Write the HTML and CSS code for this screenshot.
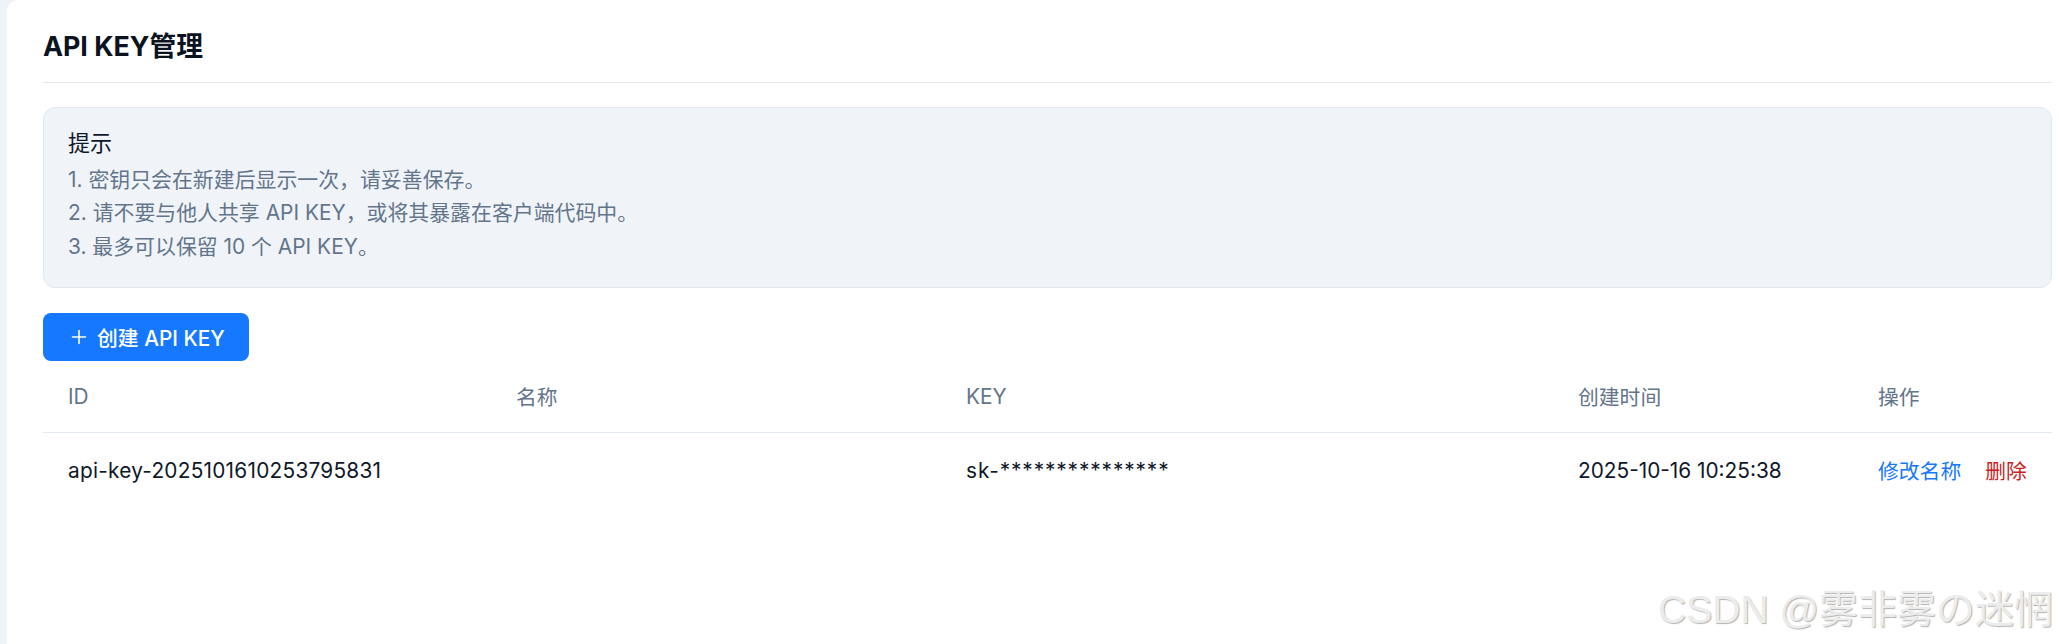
FILE: index.html
```html
<!DOCTYPE html>
<html lang="zh-CN">
<head>
<meta charset="utf-8">
<title>API KEY管理</title>
<link rel="stylesheet" href="styles.css">
</head>
<body>
<div class="page">
  <main class="card">
    <h1 class="title">API KEY管理</h1>
    <section class="tip">
      <div class="tip-title">提示</div>
      <div class="tip-line">1. 密钥只会在新建后显示一次，请妥善保存。</div>
      <div class="tip-line">2. 请不要与他人共享 API KEY，或将其暴露在客户端代码中。</div>
      <div class="tip-line">3. 最多可以保留 10 个 API KEY。</div>
    </section>
    <button class="btn-primary" type="button">
      <svg class="plus" width="16" height="16" viewBox="0 0 16 16" aria-hidden="true">
        <path d="M8 1.5v13M1.5 8h13" stroke="#fff" stroke-width="1.6" fill="none" stroke-linecap="round"/>
      </svg>
      <span>创建 API KEY</span>
    </button>
    <div class="table">
      <div class="row head">
        <div class="cell">ID</div>
        <div class="cell">名称</div>
        <div class="cell">KEY</div>
        <div class="cell">创建时间</div>
        <div class="cell">操作</div>
      </div>
      <div class="row body">
        <div class="cell id-text">api-key-2025101610253795831</div>
        <div class="cell"></div>
        <div class="cell key-text">sk-***************</div>
        <div class="cell">2025-10-16 10:25:38</div>
        <div class="cell actions">
          <a class="link" href="#">修改名称</a>
          <a class="link danger" href="#">删除</a>
        </div>
      </div>
    </div>
  </main>
  <div class="watermark">CSDN @雾非雾の迷惘</div>
</div>
</body>
</html>
```

FILE: styles.css
```css
* { box-sizing: border-box; }

html, body {
  margin: 0;
  padding: 0;
  height: 100%;
}

body {
  background: #eff3f8;
  font-family: Inter, "Noto Sans CJK SC", sans-serif;
  color: #0f172a;
  overflow: hidden;
}

.page {
  position: relative;
  min-height: 100vh;
  padding-left: 7px;
  display: flex;
}

.card {
  flex: 1;
  background: #ffffff;
  border-top-left-radius: 12px;
  padding: 28px 7px 0 36px;
  min-height: 100vh;
}

.title {
  margin: 0;
  font-size: 26.8px;
  line-height: 36px;
  font-weight: 700;
  color: #0b1220;
  padding-bottom: 18px;
  border-bottom: 1px solid #e2e8f0;
}

.tip {
  margin-top: 24px;
  background: #f0f4f9;
  border: 1px solid #e2e8f0;
  border-radius: 12px;
  padding: 20px 24px 24px;
}

.tip-title {
  font-size: 22px;
  line-height: 30px;
  color: #0f172a;
  margin-bottom: 5px;
}

.tip-line {
  font-size: 20.9px;
  line-height: 33.3px;
  color: #64748b;
}

.btn-primary {
  margin-top: 25px;
  height: 48px;
  display: inline-flex;
  align-items: center;
  gap: 10px;
  padding: 0 24px 0 28px;
  background: #1677ff;
  color: #ffffff;
  border: none;
  border-radius: 8px;
  font-family: Inter, "Noto Sans CJK SC", sans-serif;
  font-size: 20.8px;
  font-weight: 500;
  cursor: pointer;
}

.plus { display: block; }

.table {
  display: flex;
  flex-direction: column;
}

.row {
  display: grid;
  grid-template-columns: 448px 450px 612px 300px 1fr;
  align-items: center;
  height: 72px;
}

.row.head {
  border-bottom: 1px solid #e2e8f0;
}

.row.body {
  padding-top: 3px;
}

.cell {
  padding-left: 25px;
  font-size: 20.8px;
  white-space: nowrap;
}

.id-text {
  letter-spacing: 0.25px;
}

.key-text {
  letter-spacing: 0.9px;
}

.head .cell {
  color: #64748b;
}

.body .cell {
  color: #0f172a;
}

.actions {
  display: flex;
  gap: 24px;
}

.link {
  color: #1677ff;
  text-decoration: none;
}

.link.danger {
  color: #c81e1e;
}

.watermark {
  position: absolute;
  right: 6px;
  bottom: 10px;
  font-family: "Liberation Sans", "Noto Sans CJK SC", sans-serif;
  font-size: 39px;
  line-height: 48px;
  color: #ececec;
  text-shadow: 1px 1px 1px rgba(0, 0, 0, 0.3);
  pointer-events: none;
}
```
